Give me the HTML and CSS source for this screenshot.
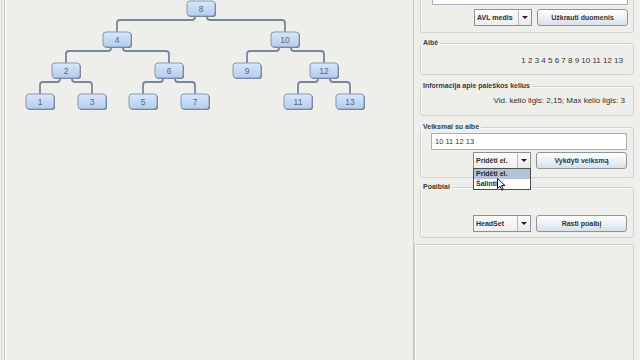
FILE: index.html
```html
<!DOCTYPE html>
<html lang="lt">
<head>
<meta charset="utf-8">
<title>AVL medis</title>
<link rel="stylesheet" href="styles.css">
</head>
<body>
<div class="app">
  <div class="tree-panel">
    <svg class="tree" viewBox="5 0 400 120" width="400" height="120">
      <defs>
        <linearGradient id="ng" x1="0" y1="0" x2="0" y2="1">
          <stop offset="0" stop-color="#d8e7fb"/>
          <stop offset="1" stop-color="#b3ccef"/>
        </linearGradient>
      </defs>
      <g class="edges">
        <path d="M195,16 V17 Q195,20 192,20 H120 Q117,20 117,23 V32"/>
        <path d="M207,16 V17 Q207,20 210,20 H282 Q285,20 285,23 V32"/>
        <path d="M111,47 V48 Q111,51 108,51 H69 Q66,51 66,54 V63"/>
        <path d="M123,47 V48 Q123,51 126,51 H166 Q169,51 169,54 V63"/>
        <path d="M279,47 V48 Q279,51 276,51 H250 Q247,51 247,54 V63"/>
        <path d="M291,47 V48 Q291,51 294,51 H321 Q324,51 324,54 V63"/>
        <path d="M60,78 V79 Q60,82 57,82 H43 Q40,82 40,85 V94"/>
        <path d="M72,78 V79 Q72,82 75,82 H89 Q92,82 92,85 V94"/>
        <path d="M163,78 V79 Q163,82 160,82 H146 Q143,82 143,85 V94"/>
        <path d="M175,78 V79 Q175,82 178,82 H192 Q195,82 195,85 V94"/>
        <path d="M318,78 V79 Q318,82 315,82 H301 Q298,82 298,85 V94"/>
        <path d="M330,78 V79 Q330,82 333,82 H347 Q350,82 350,85 V94"/>
      </g>
      <g class="node"><rect class="sh" x="188" y="2" width="28" height="15" rx="3"/><rect class="bx" x="187" y="1" width="28" height="15" rx="3"/><text x="201" y="11.5">8</text></g>
      <g class="node"><rect class="sh" x="104" y="33" width="28" height="15" rx="3"/><rect class="bx" x="103" y="32" width="28" height="15" rx="3"/><text x="117" y="42.5">4</text></g>
      <g class="node"><rect class="sh" x="272" y="33" width="28" height="15" rx="3"/><rect class="bx" x="271" y="32" width="28" height="15" rx="3"/><text x="285" y="42.5">10</text></g>
      <g class="node"><rect class="sh" x="53" y="64" width="28" height="15" rx="3"/><rect class="bx" x="52" y="63" width="28" height="15" rx="3"/><text x="66" y="73.5">2</text></g>
      <g class="node"><rect class="sh" x="156" y="64" width="28" height="15" rx="3"/><rect class="bx" x="155" y="63" width="28" height="15" rx="3"/><text x="169" y="73.5">6</text></g>
      <g class="node"><rect class="sh" x="234" y="64" width="28" height="15" rx="3"/><rect class="bx" x="233" y="63" width="28" height="15" rx="3"/><text x="247" y="73.5">9</text></g>
      <g class="node"><rect class="sh" x="311" y="64" width="28" height="15" rx="3"/><rect class="bx" x="310" y="63" width="28" height="15" rx="3"/><text x="324" y="73.5">12</text></g>
      <g class="node"><rect class="sh" x="27" y="95" width="28" height="15" rx="3"/><rect class="bx" x="26" y="94" width="28" height="15" rx="3"/><text x="40" y="104.5">1</text></g>
      <g class="node"><rect class="sh" x="79" y="95" width="28" height="15" rx="3"/><rect class="bx" x="78" y="94" width="28" height="15" rx="3"/><text x="92" y="104.5">3</text></g>
      <g class="node"><rect class="sh" x="130" y="95" width="28" height="15" rx="3"/><rect class="bx" x="129" y="94" width="28" height="15" rx="3"/><text x="143" y="104.5">5</text></g>
      <g class="node"><rect class="sh" x="182" y="95" width="28" height="15" rx="3"/><rect class="bx" x="181" y="94" width="28" height="15" rx="3"/><text x="195" y="104.5">7</text></g>
      <g class="node"><rect class="sh" x="285" y="95" width="28" height="15" rx="3"/><rect class="bx" x="284" y="94" width="28" height="15" rx="3"/><text x="298" y="104.5">11</text></g>
      <g class="node"><rect class="sh" x="337" y="95" width="28" height="15" rx="3"/><rect class="bx" x="336" y="94" width="28" height="15" rx="3"/><text x="350" y="104.5">13</text></g>
    </svg>
  </div>

  <div class="side">
    <div class="group group-load">
      <div class="field field-cut">1 2 3 4 5 6 7 8 9 10 11 12 13</div>
      <div class="row">
        <div class="combo"><span class="combo-text">AVL medis</span><span class="combo-arrow"><i class="tri"></i></span></div>
        <div class="btn">Užkrauti duomenis</div>
      </div>
    </div>

    <fieldset class="group g-set">
      <legend>Aibė</legend>
      <div class="value">1 2 3 4 5 6 7 8 9 10 11 12 13</div>
    </fieldset>

    <fieldset class="group g-info">
      <legend>Informacija apie paieškos kelius</legend>
      <div class="value">Vid. kelio ilgis: 2,15; Max kelio ilgis: 3</div>
    </fieldset>

    <fieldset class="group g-act">
      <legend>Veiksmai su aibe</legend>
      <div class="inner">
        <div class="field">10 11 12 13</div>
        <div class="row">
          <div class="combo"><span class="combo-text">Pridėti el.</span><span class="combo-arrow"><i class="tri"></i></span>
            <div class="popup">
              <div class="item sel">Pridėti el.</div>
              <div class="item">Šalinti</div>
              <svg class="cursor" width="9" height="13" viewBox="0 0 9 13"><path d="M0.5,0.5 L0.5,10.5 L3,8.2 L4.8,12.2 L6.3,11.5 L4.6,7.6 L8,7.6 Z" fill="#fff" stroke="#111" stroke-width="1" stroke-linejoin="round"/></svg>
            </div>
          </div>
          <div class="btn">Vykdyti veiksmą</div>
        </div>
      </div>
    </fieldset>

    <fieldset class="group g-sub">
      <legend>Poaibiai</legend>
      <div class="inner">
        <div class="row">
          <div class="combo"><span class="combo-text">HeadSet</span><span class="combo-arrow"><i class="tri"></i></span></div>
          <div class="btn">Rasti poaibį</div>
        </div>
      </div>
    </fieldset>

    <div class="bottom-box"></div>
  </div>
</div>
</body>
</html>
```

FILE: styles.css
```css
html, body {
  margin: 0;
  padding: 0;
  background: #eeeeea;
  overflow: hidden;
}

body {
  font-family: "Liberation Sans", Arial, sans-serif;
  color: #333;
}

.app {
  display: flex;
  height: 360px;
}

/* left tree panel */
.tree-panel {
  box-sizing: border-box;
  width: 410px;
  margin-left: 4px;
  height: 100%;
  border-left: 1px solid #c4c4c0;
  border-right: 1px solid #c8c8c4;
  box-shadow: -2px 0 0 #eeeeea, -3px 0 0 #d9d9d5, inset 1px 0 0 #fbfbf9;
}

.tree {
  display: block;
}

.edges path {
  fill: none;
  stroke: #7787a0;
  stroke-width: 1.8;
  stroke-linejoin: round;
}

.node .sh {
  fill: #6b7b91;
}

.node .bx {
  fill: url(#ng);
  stroke: #8898ae;
  stroke-width: 1;
}

.node text {
  font-family: "Liberation Sans", Arial, sans-serif;
  font-size: 8.5px;
  fill: #5e6670;
  text-anchor: middle;
}

/* right side */
.side {
  flex: 1;
  display: flex;
  flex-direction: column;
  min-width: 0;
}

.group {
  margin: 0 6px 0 6px;
  border: 1px solid #d2d2cd;
  border-radius: 3px;
  padding: 0;
  min-width: 0;
  box-shadow: inset 1px 1px 0 #f9f9f7;
}

fieldset.group {
  padding: 0;
}

.group legend {
  padding: 0 2px;
  margin-left: 0;
  font-weight: bold;
  font-size: 7px;
  line-height: 8px;
  color: #3b3b3b;
}

.group-load {
  margin-top: -20px;
  padding: 7px 5px 6px 11px;
}

.g-set {
  margin-top: 6px;
}

.g-info {
  margin-top: 7px;
}

.g-act {
  margin-top: 7px;
}

.g-act .inner {
  padding: 2px 6px 8px 10px;
}

.g-sub {
  margin-top: 5px;
}

.g-sub .inner {
  padding: 24px 6px 5px 10px;
}

.value {
  text-align: right;
  font-size: 8px;
  line-height: 10px;
  color: #333;
}

.g-set .value {
  padding: 9px 10px 8px 0;
}

.g-info .value {
  padding: 6px 8px 9px 0;
}

.field {
  box-sizing: border-box;
  height: 17px;
  border: 1px solid #a9b0b8;
  background: #fff;
  font-size: 7.5px;
  line-height: 15px;
  padding-left: 3px;
  color: #333;
  white-space: nowrap;
  overflow: hidden;
}

.field-cut {
  color: #777;
}

.row {
  display: flex;
  justify-content: flex-end;
  gap: 5px;
  margin-top: 4px;
}

.g-act .row {
  margin-top: 2px;
}

.g-sub .row {
  margin-top: 0;
}

.combo {
  position: relative;
  box-sizing: border-box;
  width: 58px;
  height: 17px;
  border: 1px solid #8f8f8f;
  display: flex;
  background: linear-gradient(#fcfcfc, #eeeeee);
}

.combo-text {
  flex: 1;
  font-weight: bold;
  font-size: 7px;
  line-height: 15px;
  padding-left: 2px;
  color: #2f2f2f;
  white-space: nowrap;
  overflow: hidden;
}

.combo-arrow {
  width: 12px;
  border-left: 1px solid #b9b9b9;
  display: flex;
  align-items: center;
  justify-content: center;
  background: linear-gradient(#fdfdfd, #e9e9e9);
}

.tri {
  display: block;
  width: 0;
  height: 0;
  border-left: 3px solid transparent;
  border-right: 3px solid transparent;
  border-top: 3px solid #222;
}

.btn {
  box-sizing: border-box;
  width: 91px;
  height: 17px;
  border: 1px solid #8e949c;
  border-radius: 3px;
  background: linear-gradient(#fefefe, #f0f3f6 45%, #d6dfe9);
  font-weight: bold;
  font-size: 7px;
  line-height: 15px;
  text-align: center;
  color: #333;
  white-space: nowrap;
}

/* open dropdown */
.popup {
  position: absolute;
  top: 100%;
  left: -1px;
  width: 58px;
  box-sizing: border-box;
  border: 1px solid #4d4d4d;
  background: #fff;
  z-index: 5;
}

.item {
  height: 10px;
  font-weight: bold;
  font-size: 7px;
  line-height: 10px;
  padding-left: 2px;
  color: #2a2a2a;
  white-space: nowrap;
}

.item.sel {
  background: #b3c3d7;
}

.cursor {
  position: absolute;
  left: 23px;
  top: 9px;
}

.bottom-box {
  flex: 1;
  margin: 6px 6px 0 0;
  border: 1px solid #d0d0cb;
  border-bottom: none;
  box-shadow: inset 1px 1px 0 #f9f9f7;
}
```
